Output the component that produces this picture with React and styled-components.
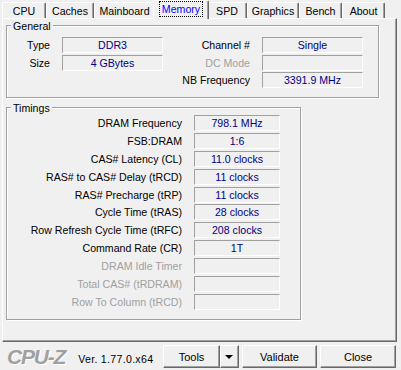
import React from 'react';
import styled, { createGlobalStyle } from 'styled-components';

const GlobalStyle = createGlobalStyle`
  html, body {
    margin: 0;
    padding: 0;
    background: #f0f0f0;
  }
  body {
    font-family: "Liberation Sans", Arial, sans-serif;
    font-size: 10.6px;
    color: #000;
  }
`;

const tabs = [
  { label: 'CPU', width: 44 },
  { label: 'Caches', width: 48 },
  { label: 'Mainboard', width: 61 },
  { label: 'Memory', width: 52, active: true },
  { label: 'SPD', width: 40 },
  { label: 'Graphics', width: 52 },
  { label: 'Bench', width: 43 },
  { label: 'About', width: 43 },
];

const general = [
  ['Type', 'DDR3', 'Channel #', 'Single'],
  ['Size', '4 GBytes', 'DC Mode', null],
  [null, null, 'NB Frequency', '3391.9 MHz'],
];

const timings = [
  ['DRAM Frequency', '798.1 MHz'],
  ['FSB:DRAM', '1:6'],
  ['CAS# Latency (CL)', '11.0 clocks'],
  ['RAS# to CAS# Delay (tRCD)', '11 clocks'],
  ['RAS# Precharge (tRP)', '11 clocks'],
  ['Cycle Time (tRAS)', '28 clocks'],
  ['Row Refresh Cycle Time (tRFC)', '208 clocks'],
  ['Command Rate (CR)', '1T'],
  ['DRAM Idle Timer', null],
  ['Total CAS# (tRDRAM)', null],
  ['Row To Column (tRCD)', null],
];

const App = () => {
  return (
    <Window>
      <GlobalStyle />
      <TabStrip>
        {tabs.map((t) => (
          <Tab key={t.label} $width={t.width} $active={t.active}>
            <TabLabel $active={t.active}>{t.label}</TabLabel>
          </Tab>
        ))}
      </TabStrip>

      <Panel>
        <GroupBox $width={373} $height={73}>
          <Legend>General</Legend>
          <GeneralGrid>
            {general.map((row, i) => (
              <React.Fragment key={i}>
                <Label>{row[0]}</Label>
                {row[1] !== null ? <Field>{row[1]}</Field> : <span />}
                <Label $disabled={row[3] === null}>{row[2]}</Label>
                <Field>{row[3]}</Field>
              </React.Fragment>
            ))}
          </GeneralGrid>
        </GroupBox>

        <GroupBox $width={295} $height={213} $top={9}>
          <Legend>Timings</Legend>
          <TimingsGrid>
            {timings.map(([label, value]) => (
              <React.Fragment key={label}>
                <Label $disabled={value === null}>{label}</Label>
                <Field>{value}</Field>
              </React.Fragment>
            ))}
          </TimingsGrid>
        </GroupBox>
      </Panel>

      <BottomBar>
        <Logo>CPU-Z</Logo>
        <Version>Ver. 1.77.0.x64</Version>
        <Buttons>
          <SplitButton>
            <Button $width={57}>Tools</Button>
            <Button $width={19}>
              <Arrow />
            </Button>
          </SplitButton>
          <Button $width={75}>Validate</Button>
          <Button $width={76}>Close</Button>
        </Buttons>
      </BottomBar>
    </Window>
  );
};

const Window = styled.div`
  width: 401px;
  height: 370px;
  background: #f0f0f0;
  display: flex;
  flex-direction: column;
  overflow: hidden;
`;

const TabStrip = styled.div`
  display: flex;
  align-items: flex-end;
  height: 18px;
  padding-left: 2px;
`;

const Tab = styled.div`
  position: relative;
  z-index: ${(p) => (p.$active ? 2 : 0)};
  box-sizing: border-box;
  width: ${(p) => p.$width + (p.$active ? 4 : 0)}px;
  height: ${(p) => (p.$active ? 19 : 16)}px;
  margin: ${(p) => (p.$active ? '0 -2px -1px' : '0')};
  background: #f0f0f0;
  border-top: 1px solid #fff;
  border-left: 1px solid #fff;
  border-right: 1px solid #696969;
  box-shadow: inset -1px 0 0 #a0a0a0;
  border-radius: 2px 2px 0 0;
  display: flex;
  align-items: center;
  justify-content: center;
  padding-bottom: ${(p) => (p.$active ? 3 : 0)}px;
`;

const TabLabel = styled.span`
  color: ${(p) => (p.$active ? '#0000ff' : '#000')};
  line-height: 12px;
  padding: 0 1px;
  outline: ${(p) => (p.$active ? '1px dotted #000' : 'none')};
  outline-offset: 1px;
`;

const Panel = styled.div`
  box-sizing: border-box;
  width: 395px;
  height: 324px;
  margin-left: 2px;
  padding: 6px 0 0 3px;
  border-top: 1px solid #fff;
  border-left: 1px solid #fff;
  border-right: 1px solid #696969;
  border-bottom: 1px solid #696969;
  box-shadow: inset -1px -1px 0 #a0a0a0;
  position: relative;
  z-index: 1;
`;

const GroupBox = styled.div`
  position: relative;
  box-sizing: border-box;
  width: ${(p) => p.$width}px;
  height: ${(p) => p.$height}px;
  margin-top: ${(p) => p.$top || 0}px;
  border: 1px solid #a0a0a0;
  box-shadow: inset 1px 1px 0 #fff, 1px 1px 0 #fff;
`;

const Legend = styled.span`
  position: absolute;
  top: -6px;
  left: 4px;
  padding: 0 2px;
  background: #f0f0f0;
  line-height: 13px;
`;

const GeneralGrid = styled.div`
  display: grid;
  grid-template-columns: 55px 101px 99px 101px;
  grid-auto-rows: 16px;
  row-gap: 1.5px;
  padding-top: 11px;
`;

const TimingsGrid = styled.div`
  display: grid;
  grid-template-columns: 187px 86px;
  grid-auto-rows: 16px;
  row-gap: 1.9px;
  padding-top: 7px;
`;

const Label = styled.span`
  text-align: right;
  padding-right: 12px;
  line-height: 16px;
  white-space: nowrap;
  color: ${(p) => (p.$disabled ? '#a0a0a0' : '#000')};
`;

const Field = styled.div`
  box-sizing: border-box;
  height: 16px;
  border: 1px solid;
  border-color: #a0a0a0 #fff #fff #a0a0a0;
  color: #000080;
  text-align: center;
  line-height: 14px;
  white-space: nowrap;
`;

const BottomBar = styled.div`
  flex: 1;
  display: flex;
  align-items: center;
  padding: 1px 5px 0 7px;
`;

const Logo = styled.span`
  font-family: "Liberation Sans", Arial, sans-serif;
  font-weight: bold;
  font-style: italic;
  font-size: 21px;
  letter-spacing: -1.2px;
  color: #a0a0a0;
  text-shadow: 1px 1px 0 #fff;
`;

const Version = styled.span`
  margin-left: 13px;
  margin-top: 4px;
  letter-spacing: 0.3px;
`;

const Buttons = styled.div`
  margin-left: auto;
  display: flex;
  gap: 3px;
`;

const SplitButton = styled.div`
  display: flex;
`;

const Button = styled.div`
  box-sizing: border-box;
  width: ${(p) => p.$width}px;
  height: 23px;
  border: 1px solid;
  border-color: #fff #696969 #696969 #fff;
  box-shadow: inset -1px -1px 0 #a0a0a0;
  background: #f0f0f0;
  display: flex;
  align-items: center;
  justify-content: center;
  font-size: 11px;
`;

const Arrow = styled.span`
  width: 0;
  height: 0;
  border-left: 4px solid transparent;
  border-right: 4px solid transparent;
  border-top: 4px solid #000;
  margin-right: 1px;
`;

export default App;
